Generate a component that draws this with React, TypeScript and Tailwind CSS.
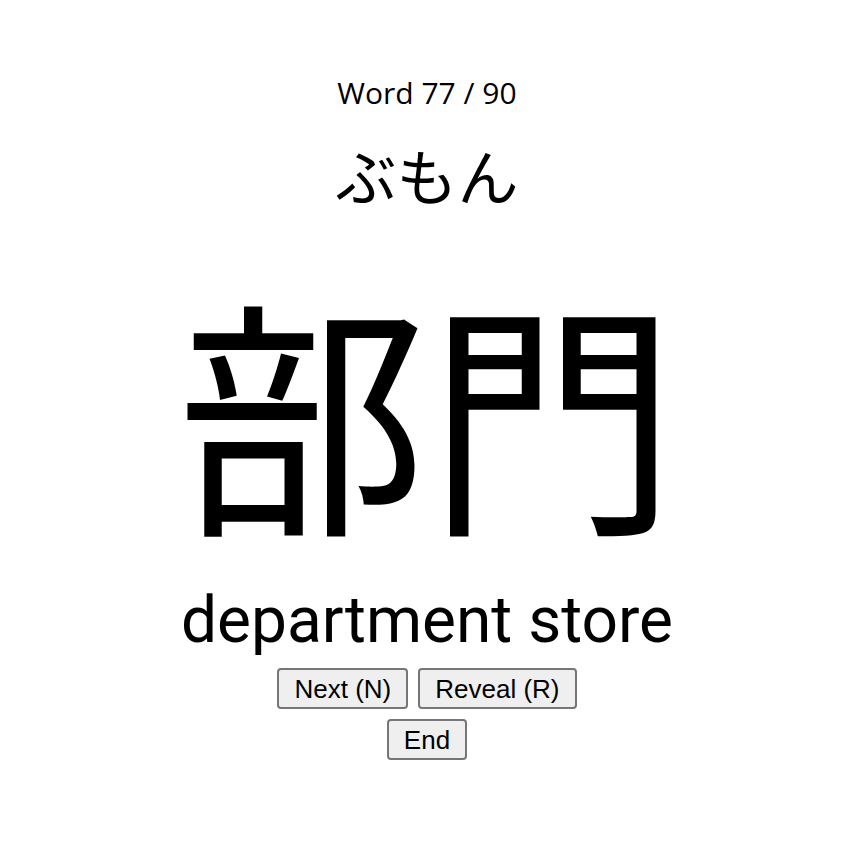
import React from "react";

export default function App() {
  const btn =
    "px-[15px] h-[41px] text-[26px] leading-none bg-[#efefef] border-2 border-[#767676] rounded-[4px] text-black font-['Liberation_Sans',Arial,sans-serif]";
  return (
    <div className="w-[854px] h-[848px] bg-white flex flex-col items-center text-black">
      <div className="mt-[73px] text-[30px] leading-[40px] font-['Open_Sans',sans-serif]">Word 77 / 90</div>
      <div className="mt-[30px] text-[61px] leading-[64px] font-['Noto_Sans_CJK_JP',sans-serif]">ぶもん</div>
      <div className="mt-[70px] text-[250px] leading-[260px] font-['Noto_Sans_CJK_JP',sans-serif]">部門</div>
      <div className="mt-[46px] text-[64px] leading-[76px] font-['Roboto',sans-serif]">department store</div>
      <div className="mt-[9px] flex gap-[10px]">
        <button className={btn}>Next (N)</button>
        <button className={btn}>Reveal (R)</button>
      </div>
      <div className="mt-[10px]">
        <button className={btn}>End</button>
      </div>
    </div>
  );
}
